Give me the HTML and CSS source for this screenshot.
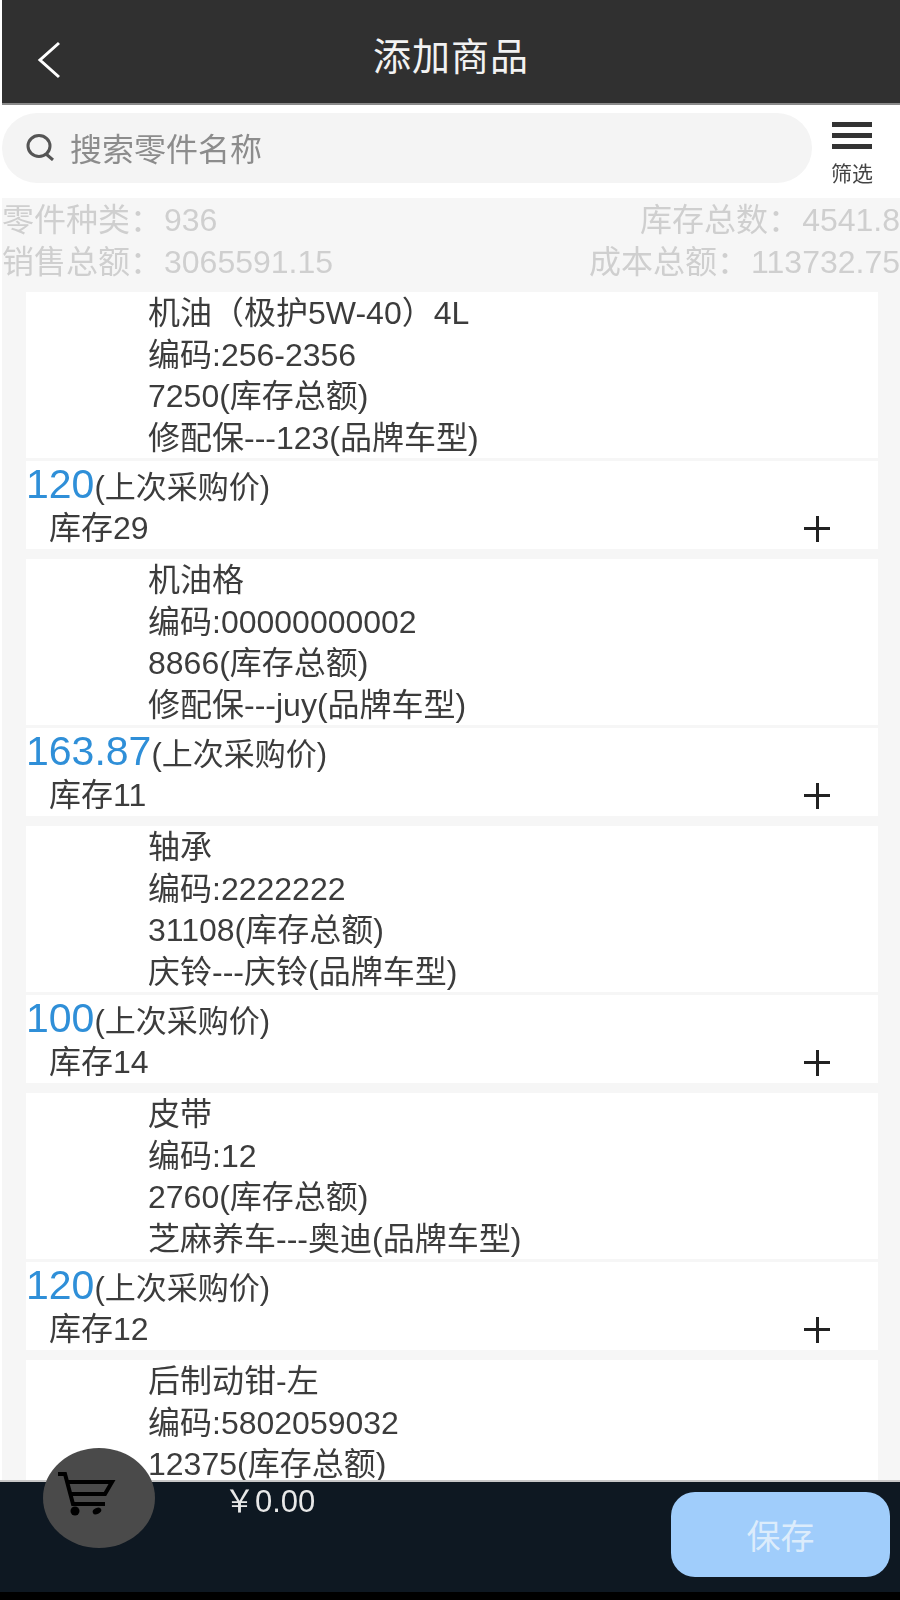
FILE: index.html
```html
<!DOCTYPE html>
<html lang="zh-CN">
<head>
    <meta charset="utf-8"/>
    <meta name="viewport" content="width=device-width, initial-scale=1.0">
    <title>添加商品</title>
    <link rel="stylesheet" href="styles.css">
</head>
<body>
    <header class="top-bar">
        <svg class="back-icon" width="26" height="38" viewBox="0 0 26 38"><path d="M23 2 L4 19 L23 36" fill="none" stroke="#fff" stroke-width="3"/></svg>
        <h1>添加商品</h1>
    </header>

    <div class="search-row">
        <div class="search-box">
            <svg class="search-icon" width="30" height="28" viewBox="0 0 30 28"><ellipse cx="14" cy="13" rx="11" ry="10.5" fill="none" stroke="#555" stroke-width="3"/><path d="M21 21 L28 27" stroke="#555" stroke-width="3"/></svg>
            <span>搜索零件名称</span>
        </div>
        <div class="filter-btn">
            <span class="bar"></span>
            <span class="bar"></span>
            <span class="bar"></span>
            <span class="filter-label">筛选</span>
        </div>
    </div>

    <div class="content">
        <div class="stats">
            <div class="stats-line"><span>零件种类：<span class="stat-value">936</span></span><span>库存总数：<span class="stat-value">4541.8</span></span></div>
            <div class="stats-line"><span>销售总额：<span class="stat-value">3065591.15</span></span><span>成本总额：<span class="stat-value">113732.75</span></span></div>
        </div>

        <div class="goods">
            <div class="goods-info">
                <div>机油（极护5W-40）4L</div>
                <div>编码:256-2356</div>
                <div>7250(库存总额)</div>
                <div>修配保---123(品牌车型)</div>
            </div>
            <div class="goods-buy">
                <div><span class="price">120</span><span class="price-note">(上次采购价)</span></div>
                <div class="stock-line"><span>库存29</span><span class="plus"></span></div>
            </div>
        </div>

        <div class="goods">
            <div class="goods-info">
                <div>机油格</div>
                <div>编码:00000000002</div>
                <div>8866(库存总额)</div>
                <div>修配保---juy(品牌车型)</div>
            </div>
            <div class="goods-buy">
                <div><span class="price">163.87</span><span class="price-note">(上次采购价)</span></div>
                <div class="stock-line"><span>库存11</span><span class="plus"></span></div>
            </div>
        </div>

        <div class="goods">
            <div class="goods-info">
                <div>轴承</div>
                <div>编码:2222222</div>
                <div>31108(库存总额)</div>
                <div>庆铃---庆铃(品牌车型)</div>
            </div>
            <div class="goods-buy">
                <div><span class="price">100</span><span class="price-note">(上次采购价)</span></div>
                <div class="stock-line"><span>库存14</span><span class="plus"></span></div>
            </div>
        </div>

        <div class="goods">
            <div class="goods-info">
                <div>皮带</div>
                <div>编码:12</div>
                <div>2760(库存总额)</div>
                <div>芝麻养车---奥迪(品牌车型)</div>
            </div>
            <div class="goods-buy">
                <div><span class="price">120</span><span class="price-note">(上次采购价)</span></div>
                <div class="stock-line"><span>库存12</span><span class="plus"></span></div>
            </div>
        </div>

        <div class="goods">
            <div class="goods-info">
                <div>后制动钳-左</div>
                <div>编码:5802059032</div>
                <div>12375(库存总额)</div>
            </div>
        </div>
    </div>

    <footer class="bottom-bar">
        <div class="cart-btn">
            <svg width="58" height="48" viewBox="0 0 58 48"><path d="M0 4 H7 L15 34 H47" fill="none" stroke="#000" stroke-width="4"/><path d="M9 12 H54 L47 24 H12" fill="none" stroke="#000" stroke-width="4"/><circle cx="17" cy="41" r="4.5" fill="#000"/><ellipse cx="39" cy="41" rx="4.5" ry="3" transform="rotate(-25 39 41)" fill="#000"/></svg>
        </div>
        <span class="total">￥0.00</span>
        <button class="save-btn">保存</button>
    </footer>
    <div class="bottom-strip"></div>
</body>
</html>
```

FILE: styles.css
```css
html, body {
    height: 100%;
}

body {
    margin: 0;
    padding-left: 2px;
    height: 1600px;
    overflow: hidden;
    display: flex;
    flex-direction: column;
    position: relative;
    background-color: #fff;
    color: #3c3c3c;
    font-family: "Liberation Sans", "Noto Sans CJK SC", sans-serif;
    font-size: 32px;
    filter: blur(0.6px);
}

.top-bar {
    flex: none;
    height: 105px;
    display: flex;
    align-items: center;
    justify-content: center;
    position: relative;
    background-color: #303030;
    border-bottom: 2px solid #8a8a8a;
    box-sizing: border-box;
}

.top-bar h1 {
    margin: 4px 0 0;
    font-size: 38px;
    font-weight: 400;
    letter-spacing: 1px;
    color: #f2f2f2;
}

.back-icon {
    position: absolute;
    left: 34px;
    top: 41px;
}

.search-row {
    flex: none;
    height: 93px;
    display: flex;
    align-items: flex-start;
    box-sizing: border-box;
    padding-top: 8px;
}

.search-box {
    width: 810px;
    height: 70px;
    border-radius: 35px;
    background-color: #f4f4f4;
    display: flex;
    align-items: center;
    gap: 15px;
    padding-left: 23px;
    padding-bottom: 3px;
    box-sizing: border-box;
    color: #8c8c8c;
    font-size: 32px;
}

.filter-btn {
    margin-left: 18px;
    width: 44px;
    display: flex;
    flex-direction: column;
    align-items: center;
    padding-top: 9px;
}

.bar {
    width: 40px;
    height: 5px;
    margin-bottom: 6px;
    background-color: #333;
}

.filter-label {
    margin-top: 6px;
    font-size: 21px;
    line-height: 26px;
    white-space: nowrap;
    color: #444;
}

.content {
    flex: 1;
    min-height: 0;
    overflow: hidden;
    background-color: #f6f6f6;
}

.stats {
    padding-top: 1px;
    padding-bottom: 9px;
    color: #cfcfcf;
}

.stats-line {
    display: flex;
    justify-content: space-between;
    height: 42px;
    line-height: 42px;
}

.stat-value {
    margin-left: 2px;
}

.goods {
    margin: 0 22px 10px 24px;
}

.goods-info {
    background-color: #fff;
    padding-left: 122px;
    padding-top: 1px;
    height: 166px;
    box-sizing: border-box;
    line-height: 41.5px;
    margin-bottom: 3px;
}

.goods-buy {
    background-color: #fff;
    height: 88px;
    line-height: 41px;
    padding-top: 3px;
    box-sizing: border-box;
}

.price {
    font-size: 41px;
    color: #2f8fd8;
}

.price-note {
    font-size: 31px;
}

.stock-line {
    display: flex;
    justify-content: space-between;
    align-items: center;
    padding: 0 48px 0 23px;
}

.plus {
    width: 26px;
    height: 26px;
    background:
        linear-gradient(#222, #222) center / 26px 3px no-repeat,
        linear-gradient(#222, #222) center / 3px 26px no-repeat;
}

.bottom-bar {
    flex: none;
    height: 112px;
    margin-left: -2px;
    position: relative;
    background-color: #0e1822;
    border-top: 2px solid #c8c8c8;
    box-sizing: border-box;
}

.bottom-strip {
    flex: none;
    height: 8px;
    margin-left: -2px;
    background-color: #000;
}

.cart-btn {
    position: absolute;
    left: 43px;
    top: -34px;
    width: 112px;
    height: 100px;
    border-radius: 50%;
    background-color: #4a4a4a;
}

.cart-btn svg {
    position: absolute;
    left: 15px;
    top: 22px;
}

.total {
    position: absolute;
    left: 224px;
    top: 0;
    line-height: 40px;
    font-size: 31px;
    color: #e8e8e8;
}

.save-btn {
    position: absolute;
    left: 671px;
    top: 10px;
    width: 219px;
    height: 85px;
    border: none;
    border-radius: 24px;
    background-color: #a0cdfb;
    color: #dcecfb;
    font-family: inherit;
    font-size: 34px;
}
```
